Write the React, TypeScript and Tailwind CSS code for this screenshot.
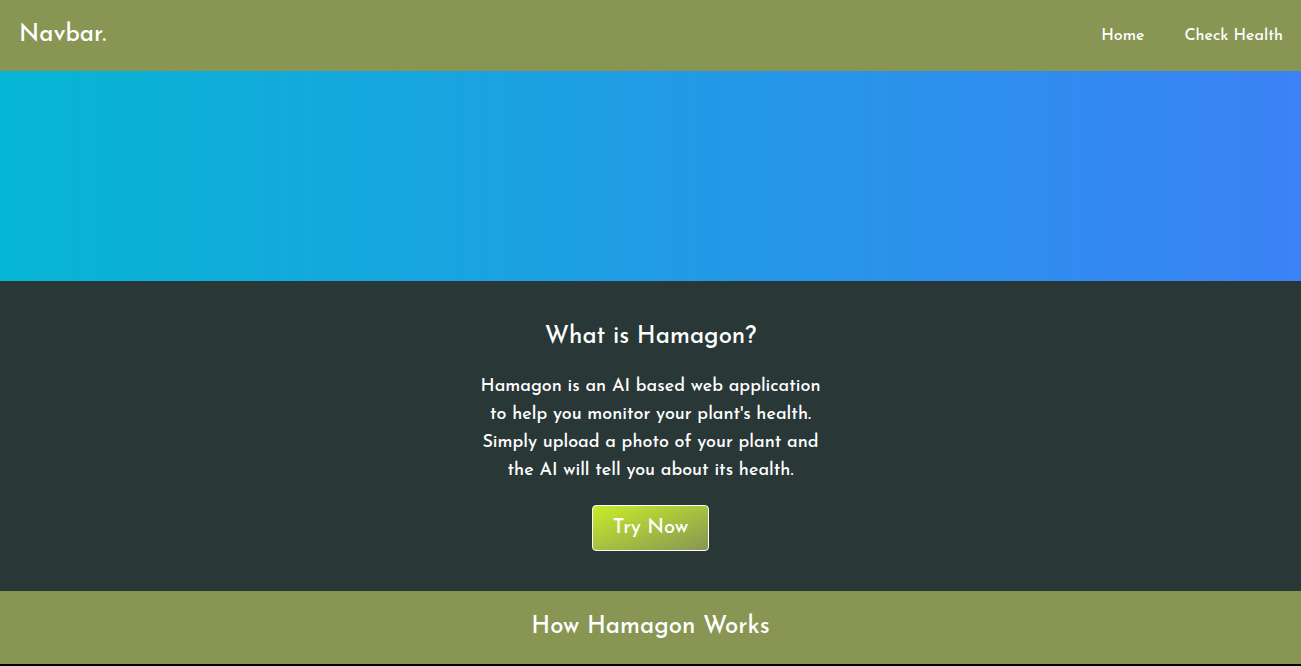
import React from "react";

const links = [
  { label: "Home", href: "#home" },
  { label: "Check Health", href: "#check" },
];

export default function App() {
  return (
    <div className="min-h-screen bg-black font-['Josefin_Sans','Lato',sans-serif] font-medium text-white">
      <nav className="flex items-center justify-between bg-[#889553] py-4 pr-[18px] pl-[19px]">
        <a href="#home" className="text-2xl leading-[39px]">
          Navbar.
        </a>
        <ul className="flex gap-10">
          {links.map((link) => (
            <li key={link.label}>
              <a href={link.href} className="text-base">
                {link.label}
              </a>
            </li>
          ))}
        </ul>
      </nav>
      <main>
        <div className="h-[210px] bg-linear-to-r/srgb from-[#06b6d4] to-[#3b82f6]" />
        <section className="flex flex-col items-center bg-[#293737] px-5 py-10 text-center">
          <h1 className="text-2xl leading-8">What is Hamagon?</h1>
          <p className="mt-5 text-lg leading-7">
            Hamagon is an AI based web application
            <br />
            to help you monitor your plant's health.
            <br />
            Simply upload a photo of your plant and
            <br />
            the AI will tell you about its health.
          </p>
          <button
            type="button"
            className="mt-5 rounded border border-white bg-linear-to-br/srgb from-[#c8ed2a] to-[#889553] px-5 py-2 text-xl leading-7"
          >
            Try Now
          </button>
        </section>
        <section className="bg-[#889553] px-5 py-5 text-center">
          <h2 className="text-2xl leading-[33px]">How Hamagon Works</h2>
        </section>
      </main>
    </div>
  );
}
